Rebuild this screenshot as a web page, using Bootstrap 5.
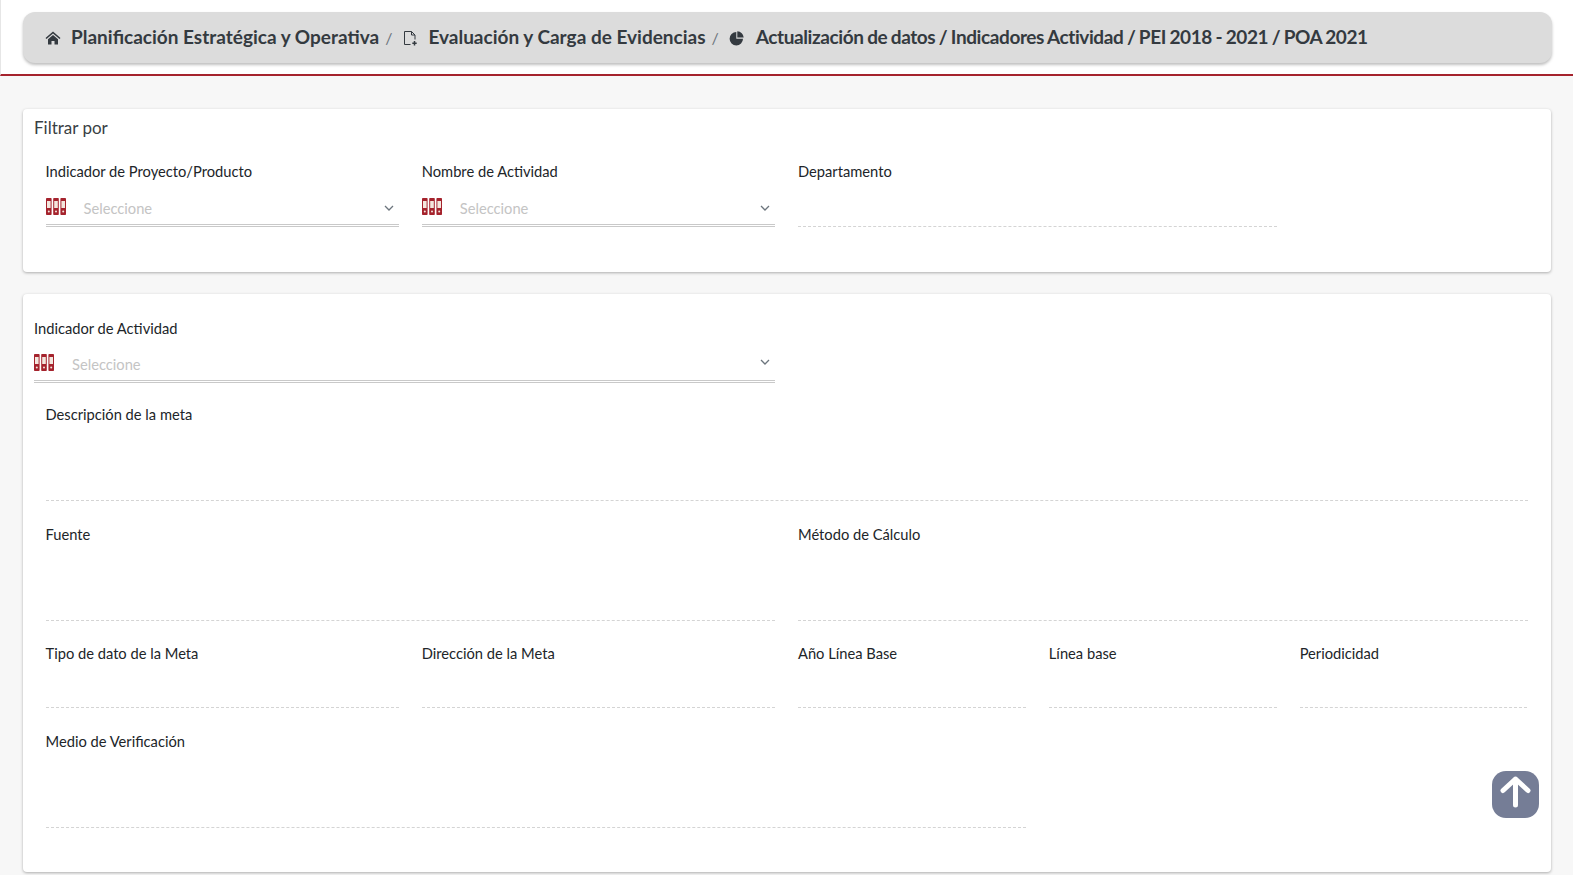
<!DOCTYPE html>
<html lang="es">
<head>
  <meta charset="UTF-8">
  <title>Actualización de datos</title>
  <link rel="stylesheet" href="https://cdn.jsdelivr.net/npm/bootstrap@5.3.0/dist/css/bootstrap.min.css">
  <style>
    html, body {
      height: 875px;
      overflow: hidden;
    }
    body {
      background-color: #f7f7f7;
      font-family: "Lato", "Noto Sans", sans-serif;
      color: #212529;
    }
    .top-strip {
      background-color: #fff;
      height: 76px;
      padding: 12px 21px 0 22px;
      border-left: 1px solid #e6e6e6;
      border-bottom: 2px solid #a5232d;
    }
    .crumbs {
      background-color: #dcdcdc;
      height: 51px;
      border-radius: 12px;
      box-shadow: 0 2px 3px rgba(0, 0, 0, .25);
      padding-left: 22px;
      font-size: 19px;
      font-weight: 700;
      color: #343a40;
      white-space: nowrap;
    }
    .crumb-sep {
      font-weight: 400;
      color: #6c757d;
      font-size: 16px;
      margin: 0 10px 0 6px;
    }
    .crumb-ico {
      width: 16px;
      height: 16px;
      margin-right: 10px;
      flex: none;
    }
    .crumb-ico-last {
      margin-right: 11px;
    }
    .crumb-tight {
      letter-spacing: -.4px;
      word-spacing: -.7px;
    }
    .panel {
      background-color: #fff;
      margin: 0 22px 0 23px;
      border-radius: 4px;
      box-shadow: 0 1px 3px rgba(0, 0, 0, .3);
      padding: 0 12px 0 11px;
    }
    .panel-filter {
      margin-top: 33px;
      height: 163px;
      padding-top: 9px;
    }
    .panel-main {
      margin-top: 22px;
      height: 578px;
      padding-top: 25px;
    }
    .panel-title {
      font-size: 17px;
      line-height: 20px;
      color: #3a3f44;
      margin-bottom: 24px;
    }
    .fields {
      --bs-gutter-x: 23px;
      --bs-gutter-y: 0;
      margin-left: 0;
      margin-right: 0;
    }
    .fields-below {
      margin-top: 22px;
    }
    .field-label {
      font-size: 14.7px;
      line-height: 20px;
      color: #212529;
      margin: -1px 0 1px;
    }
    .field-empty {
      border-bottom: 1px dashed #d4d4d4;
    }
    .h-select { height: 45px; }
    .h-text { height: 76px; }
    .h-short { height: 44px; }
    .row-wide { margin-bottom: 24px; }
    .row-tall { margin-bottom: 23px; }
    .pick {
      height: 45px;
      border-bottom: 3px double #c9c9c9;
      padding-top: 17px;
    }
    .panel-main .pick {
      height: 44px;
      padding-top: 16px;
    }
    .pick-ico {
      width: 20px;
      height: 17px;
      margin-right: 18px;
      flex: none;
      margin-top: -1px;
    }
    .pick-text {
      font-size: 14.7px;
      line-height: 20px;
      color: #c4c4c4;
      margin-top: -1px;
    }
    .pick-caret {
      width: 10px;
      height: 6px;
      margin-left: auto;
      margin-right: 5px;
      margin-top: 6px;
      flex: none;
    }
    .panel-main .pick-caret {
      margin-top: 4px;
    }
    .flush { padding-left: 0 !important; }
    .to-top {
      position: absolute;
      left: 1492px;
      top: 771px;
      width: 47px;
      height: 47px;
      border: 0;
      padding: 0;
      border-radius: 14px;
      background-color: #757d96;
    }
  </style>
</head>
<body>

  <svg class="d-none">
    <symbol id="binders" viewBox="0 0 20 17">
      <g fill="#a5232d">
        <rect x="0" y="0" width="5.600" height="17" rx=".8"/>
        <rect x="7.200" y="0" width="5.600" height="17" rx=".8"/>
        <rect x="14.400" y="0" width="5.600" height="17" rx=".8"/>
      </g>
      <g fill="#f3e7de">
        <rect x="1" y="3" width="3.600" height="7"/>
        <rect x="8.200" y="3" width="3.600" height="7"/>
        <rect x="15.400" y="3" width="3.600" height="7"/>
        <circle cx="2.800" cy="13.500" r="1"/>
        <circle cx="10" cy="13.500" r="1"/>
        <circle cx="17.200" cy="13.500" r="1"/>
      </g>
    </symbol>
  </svg>

  <div class="top-strip">
    <div class="crumbs d-flex align-items-center">
      <svg class="crumb-ico" viewBox="0 0 16 16"><path fill="#343a40" d="M8 1.500 0.500 8l1 1.100L8 3.600l6.500 5.500 1-1.100zM8 5 3 9.300V14.500h3.500v-3.500h3v3.500H13V9.300z"/></svg>
      <span>Planificación Estratégica y Operativa</span>
      <span class="crumb-sep">/</span>
      <svg class="crumb-ico" viewBox="0 0 16 16"><path fill="none" stroke="#343a40" stroke-width="1" d="M8.500 14.500H2.500V1.500H9.500L13 5V9.500M9.500 1.500V5H13"/><path fill="none" stroke="#343a40" stroke-width="1.500" d="M12.500 11V15.500M10.300 13.300H14.700"/></svg>
      <span>Evaluación y Carga de Evidencias</span>
      <span class="crumb-sep">/</span>
      <svg class="crumb-ico crumb-ico-last" viewBox="0 0 16 16"><path fill="#343a40" d="M7.300 2V8.700H14A6.700 6.700 0 1 1 7.300 2zM8.300 1.300A6.500 6.500 0 0 1 14.700 7.600H8.300z"/></svg>
      <span class="crumb-tight">Actualización de datos / Indicadores Actividad / PEI 2018 - 2021 / POA 2021</span>
    </div>
  </div>

  <div class="panel panel-filter">
    <div class="panel-title">Filtrar por</div>
    <div class="row fields">
      <div class="col-3">
        <p class="field-label">Indicador de Proyecto/Producto</p>
        <div class="pick d-flex">
          <svg class="pick-ico"><use href="#binders"/></svg>
          <span class="pick-text">Seleccione</span>
          <svg class="pick-caret" viewBox="0 0 10 6"><path fill="none" stroke="#6c757d" stroke-width="1.300" d="M1 1l4 4 4-4"/></svg>
        </div>
      </div>
      <div class="col-3">
        <p class="field-label">Nombre de Actividad</p>
        <div class="pick d-flex">
          <svg class="pick-ico"><use href="#binders"/></svg>
          <span class="pick-text">Seleccione</span>
          <svg class="pick-caret" viewBox="0 0 10 6"><path fill="none" stroke="#6c757d" stroke-width="1.300" d="M1 1l4 4 4-4"/></svg>
        </div>
      </div>
      <div class="col-4">
        <p class="field-label">Departamento</p>
        <div class="field-empty h-select"></div>
      </div>
    </div>
  </div>

  <div class="panel panel-main">
    <div class="row fields">
      <div class="col-6 flush">
        <p class="field-label">Indicador de Actividad</p>
        <div class="pick d-flex">
          <svg class="pick-ico"><use href="#binders"/></svg>
          <span class="pick-text">Seleccione</span>
          <svg class="pick-caret" viewBox="0 0 10 6"><path fill="none" stroke="#6c757d" stroke-width="1.300" d="M1 1l4 4 4-4"/></svg>
        </div>
      </div>
    </div>
    <div class="row fields fields-below">
      <div class="col-12 row-wide">
        <p class="field-label">Descripción de la meta</p>
        <div class="field-empty h-text"></div>
      </div>
      <div class="col-6 row-tall">
        <p class="field-label">Fuente</p>
        <div class="field-empty h-text"></div>
      </div>
      <div class="col-6 row-tall">
        <p class="field-label">Método de Cálculo</p>
        <div class="field-empty h-text"></div>
      </div>
      <div class="col-3 mb-4">
        <p class="field-label">Tipo de dato de la Meta</p>
        <div class="field-empty h-short"></div>
      </div>
      <div class="col-3 mb-4">
        <p class="field-label">Dirección de la Meta</p>
        <div class="field-empty h-short"></div>
      </div>
      <div class="col-2 mb-4">
        <p class="field-label">Año Línea Base</p>
        <div class="field-empty h-short"></div>
      </div>
      <div class="col-2 mb-4">
        <p class="field-label">Línea base</p>
        <div class="field-empty h-short"></div>
      </div>
      <div class="col-2 mb-4">
        <p class="field-label">Periodicidad</p>
        <div class="field-empty h-short"></div>
      </div>
      <div class="col-8">
        <p class="field-label">Medio de Verificación</p>
        <div class="field-empty h-text"></div>
      </div>
    </div>
  </div>

  <button class="to-top d-flex align-items-center justify-content-center" type="button" aria-label="Subir">
    <svg width="47" height="47" viewBox="0 0 47 47"><path fill="none" stroke="#fff" stroke-width="5" stroke-linecap="round" stroke-linejoin="round" d="M23.500 34V8M11 19.500 23.500 8 36 19.500"/></svg>
  </button>

  <script src="https://cdn.jsdelivr.net/npm/bootstrap@5.3.0/dist/js/bootstrap.bundle.min.js"></script>
</body>
</html>
